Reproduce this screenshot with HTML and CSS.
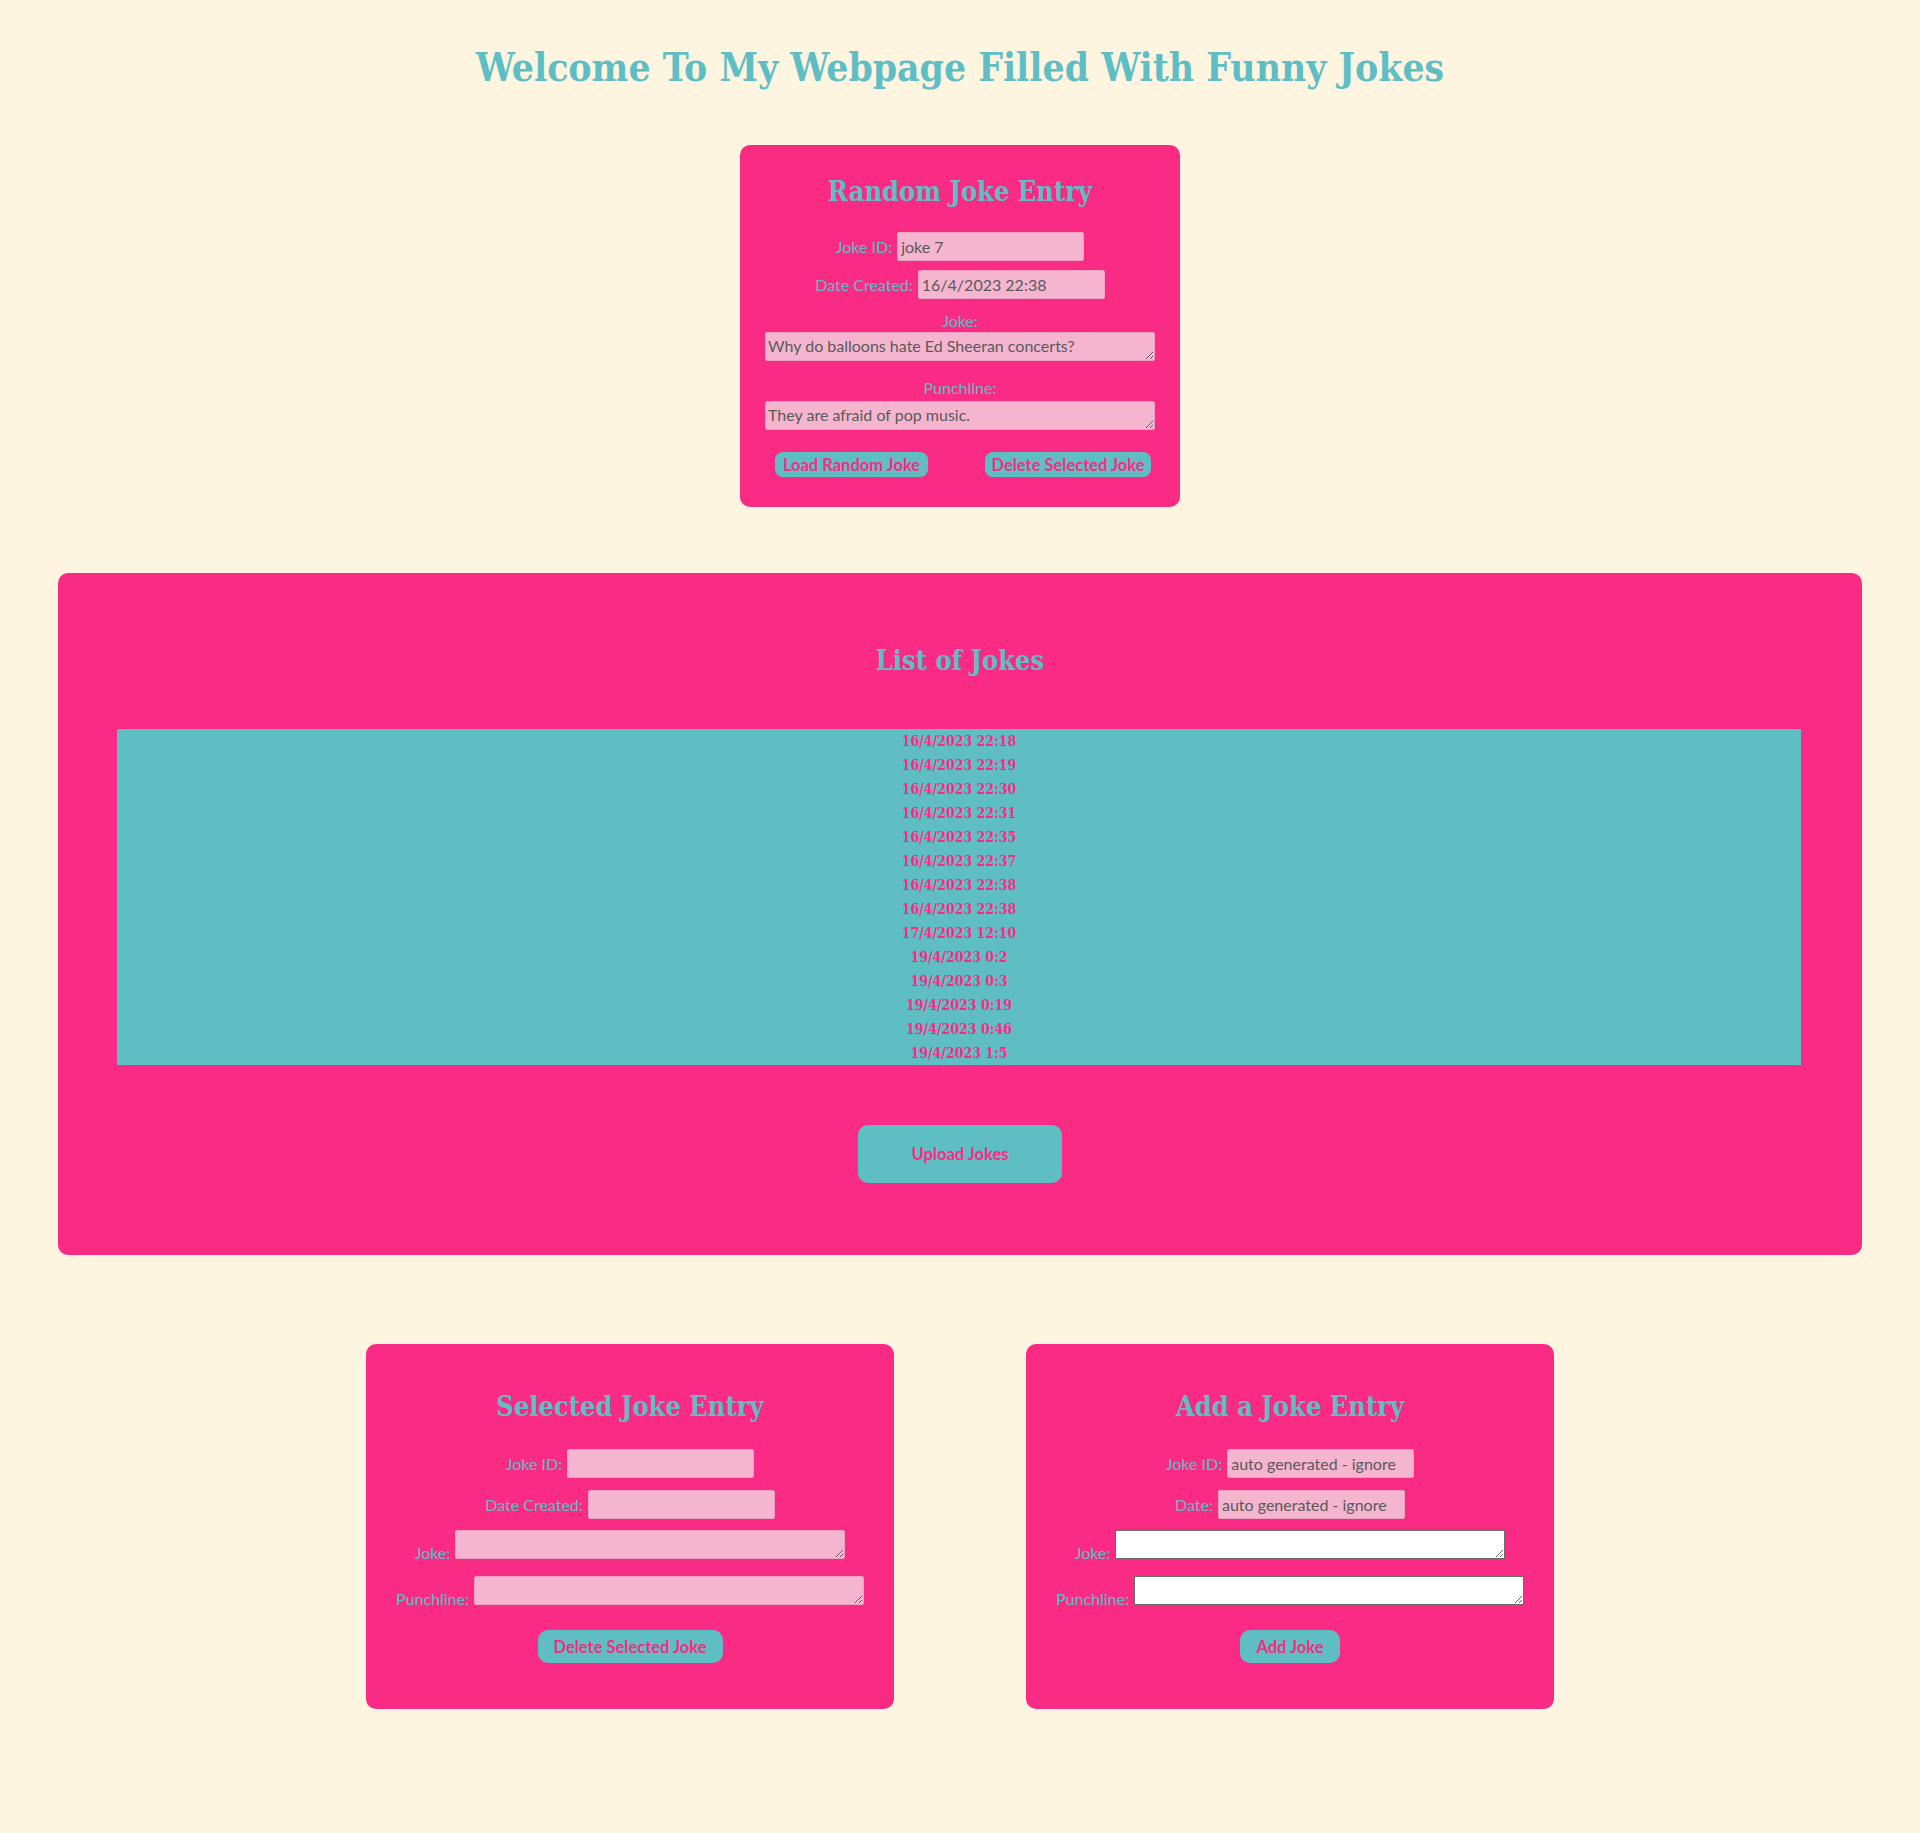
FILE: index.html
```html
<!DOCTYPE html>
<html lang="en">
<head>
<meta charset="utf-8">
<title>Funny Jokes</title>
<link rel="stylesheet" href="styles.css">
</head>
<body>
<h1 class="page-title">Welcome To My Webpage Filled With Funny Jokes</h1>

<section class="card card-random">
  <h2 class="card-title">Random Joke Entry</h2>
  <div class="row row-first">
    <label class="lbl">Joke ID:</label>
    <input class="field" type="text" value="joke 7">
  </div>
  <div class="row row-second">
    <label class="lbl">Date Created:</label>
    <input class="field" type="text" value="16/4/2023 22:38">
  </div>
  <div class="stack stack-joke">
    <label class="lbl">Joke:</label>
    <textarea class="area" rows="1">Why do balloons hate Ed Sheeran concerts?</textarea>
  </div>
  <div class="stack stack-punch">
    <label class="lbl">Punchline:</label>
    <textarea class="area" rows="1">They are afraid of pop music.</textarea>
  </div>
  <div class="btn-row">
    <button class="btn btn-load">Load Random Joke</button>
    <button class="btn btn-del">Delete Selected Joke</button>
  </div>
</section>

<section class="list-panel">
  <h2 class="card-title">List of Jokes</h2>
  <ul class="joke-list">
    <li>16/4/2023 22:18</li>
    <li>16/4/2023 22:19</li>
    <li>16/4/2023 22:30</li>
    <li>16/4/2023 22:31</li>
    <li>16/4/2023 22:35</li>
    <li>16/4/2023 22:37</li>
    <li>16/4/2023 22:38</li>
    <li>16/4/2023 22:38</li>
    <li>17/4/2023 12:10</li>
    <li>19/4/2023 0:2</li>
    <li>19/4/2023 0:3</li>
    <li>19/4/2023 0:19</li>
    <li>19/4/2023 0:46</li>
    <li>19/4/2023 1:5</li>
  </ul>
  <button class="btn btn-upload">Upload Jokes</button>
</section>

<div class="bottom-cards">
  <section class="card card-wide">
    <h2 class="card-title">Selected Joke Entry</h2>
    <div class="row row-b1">
      <label class="lbl">Joke ID:</label>
      <input class="field" type="text" value="">
    </div>
    <div class="row row-b2">
      <label class="lbl">Date Created:</label>
      <input class="field" type="text" value="">
    </div>
    <div class="row row-area row-b3">
      <label class="lbl">Joke:</label>
      <textarea class="area" rows="1"></textarea>
    </div>
    <div class="row row-area row-b4">
      <label class="lbl">Punchline:</label>
      <textarea class="area" rows="1"></textarea>
    </div>
    <button class="btn btn-big btn-del-wide">Delete Selected Joke</button>
  </section>

  <section class="card card-wide">
    <h2 class="card-title">Add a Joke Entry</h2>
    <div class="row row-b1">
      <label class="lbl">Joke ID:</label>
      <input class="field" type="text" value="auto generated - ignore">
    </div>
    <div class="row row-b2">
      <label class="lbl">Date:</label>
      <input class="field" type="text" value="auto generated - ignore">
    </div>
    <div class="row row-area row-b3">
      <label class="lbl">Joke:</label>
      <textarea class="area area-white" rows="1"></textarea>
    </div>
    <div class="row row-area row-b4">
      <label class="lbl">Punchline:</label>
      <textarea class="area area-white" rows="1"></textarea>
    </div>
    <button class="btn btn-big btn-add">Add Joke</button>
  </section>
</div>
</body>
</html>
```

FILE: styles.css
```css
html, body {
  margin: 0;
  padding: 0;
}

body {
  background: #fef5e1;
  font-family: "Lato", "Liberation Sans", sans-serif;
  min-height: 1833px;
}

.page-title {
  margin: 44px 0 0;
  text-align: center;
  font-family: "DejaVu Serif", "Liberation Serif", serif;
  font-stretch: condensed;
  font-weight: bold;
  font-size: 38.7px;
  line-height: 48px;
  color: #5fbec4;
}

.card {
  background: #f92b84;
  border-radius: 10px;
  box-sizing: border-box;
  display: flex;
  flex-direction: column;
  align-items: center;
}

.card-random {
  width: 440px;
  margin: 53px auto 0;
  padding: 30px 0 30px;
}

.card-title {
  margin: 0;
  font-family: "DejaVu Serif", "Liberation Serif", serif;
  font-stretch: condensed;
  font-weight: bold;
  font-size: 27px;
  line-height: 34px;
  color: #5fbec4;
  text-align: center;
}

.row {
  display: flex;
  align-items: center;
  gap: 5px;
}

.lbl {
  font-size: 16px;
  color: #5fbec4;
  line-height: 20px;
}

.field {
  box-sizing: border-box;
  width: 187px;
  height: 29px;
  margin: 0;
  padding: 1px 3px;
  font-family: "Lato", "Liberation Sans", sans-serif;
  font-size: 16px;
  color: #5a5a5a;
  background: #f6b5cf;
  border: 1px solid #e9a2c1;
  border-radius: 2px;
}

.row-first { margin-top: 23px; }
.row-second { margin-top: 9px; }

.stack {
  display: flex;
  flex-direction: column;
  align-items: center;
}

.stack .lbl { margin-bottom: 1px; }
.stack-joke { margin-top: 12px; }
.stack-punch { margin-top: 17px; }
.stack-punch .lbl { margin-bottom: 3px; }

.area {
  box-sizing: border-box;
  width: 390px;
  height: 29px;
  margin: 0;
  padding: 3px 2px;
  font-family: "Lato", "Liberation Sans", sans-serif;
  font-size: 16px;
  line-height: 20px;
  color: #5a5a5a;
  background: #f6b5cf;
  border: 1px solid #e9a2c1;
  border-radius: 2px;
  overflow: hidden;
}

.btn-row {
  align-self: stretch;
  display: flex;
  gap: 57px;
  padding-left: 35px;
  margin-top: 22px;
}

.btn {
  box-sizing: border-box;
  margin: 0;
  padding: 0;
  border: none;
  background: #5fbec4;
  color: #f92b84;
  font-family: "Lato", "Liberation Sans", sans-serif;
  font-weight: bold;
  font-size: 16.5px;
  border-radius: 8px;
  height: 25px;
  white-space: nowrap;
}

.btn-load { width: 153px; }
.btn-del { width: 166px; }

.list-panel {
  margin: 66px 58px 0;
  padding: 71px 0 72px;
  background: #f92b84;
  border-radius: 10px;
  display: flex;
  flex-direction: column;
  align-items: center;
}

.joke-list {
  list-style: none;
  margin: 51px 61px 0 59px;
  padding: 0;
  align-self: stretch;
  background: #5fbec4;
}

.joke-list li {
  text-align: center;
  line-height: 24px;
  height: 24px;
  font-family: "DejaVu Serif", "Liberation Serif", serif;
  font-stretch: condensed;
  font-weight: bold;
  font-size: 14px;
  color: #f92b84;
}

.btn-upload {
  width: 204px;
  height: 58px;
  margin-top: 60px;
  border-radius: 10px;
}

.bottom-cards {
  display: flex;
  justify-content: center;
  gap: 132px;
  margin-top: 89px;
}

.card-wide {
  width: 528px;
  padding: 46px 0 46px;
}

.row-b1 { margin-top: 25px; }
.row-b2 { margin-top: 12px; }
.row-b3 { margin-top: 11px; }
.row-b4 { margin-top: 17px; }

.row-area { align-items: flex-end; }
.row-area .lbl { margin-bottom: -4px; }

.area-white {
  background: #ffffff;
  border: 1px solid #6b6b6b;
  border-radius: 0;
}

.btn-big {
  height: 33px;
  margin-top: 25px;
  border-radius: 10px;
}

.btn-del-wide { width: 185px; }
.btn-add { width: 100px; }
```
